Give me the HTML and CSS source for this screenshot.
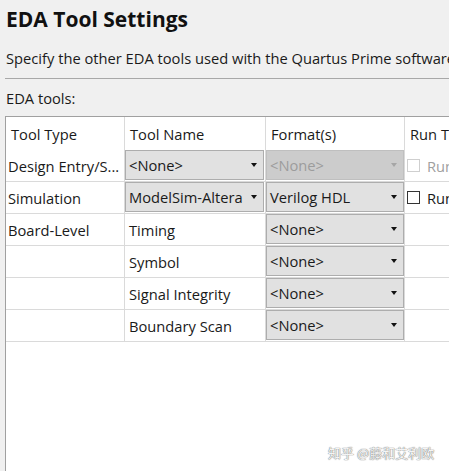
FILE: index.html
```html
<!DOCTYPE html>
<html lang="en">
<head>
  <meta charset="UTF-8" />
  <title>EDA Tool Settings</title>
  <link rel="stylesheet" href="styles.css">
</head>
<body>

<div class="page">
  <h1>EDA Tool Settings</h1>
  <p class="intro">Specify the other EDA tools used with the Quartus Prime software to develop your design.</p>
  <hr class="rule">
  <p class="label">EDA tools:</p>

  <div class="grid">
    <div class="cell head">Tool Type</div>
    <div class="cell head">Tool Name</div>
    <div class="cell head">Format(s)</div>
    <div class="cell head">Run Tool Automatically</div>

    <div class="cell">Design Entry/S...</div>
    <div class="cell"><div class="combo">&lt;None&gt;<span class="arrow"></span></div></div>
    <div class="cell"><div class="combo off">&lt;None&gt;<span class="arrow"></span></div></div>
    <div class="cell"><label class="check off"><span class="box"></span>Run this tool automatically</label></div>

    <div class="cell">Simulation</div>
    <div class="cell"><div class="combo">ModelSim-Altera<span class="arrow"></span></div></div>
    <div class="cell"><div class="combo">Verilog HDL<span class="arrow"></span></div></div>
    <div class="cell"><label class="check"><span class="box"></span>Run gate-level simulation</label></div>

    <div class="cell">Board-Level</div>
    <div class="cell sub">Timing</div>
    <div class="cell"><div class="combo">&lt;None&gt;<span class="arrow"></span></div></div>
    <div class="cell"></div>

    <div class="cell"></div>
    <div class="cell sub">Symbol</div>
    <div class="cell"><div class="combo">&lt;None&gt;<span class="arrow"></span></div></div>
    <div class="cell"></div>

    <div class="cell"></div>
    <div class="cell sub">Signal Integrity</div>
    <div class="cell"><div class="combo">&lt;None&gt;<span class="arrow"></span></div></div>
    <div class="cell"></div>

    <div class="cell"></div>
    <div class="cell sub">Boundary Scan</div>
    <div class="cell"><div class="combo">&lt;None&gt;<span class="arrow"></span></div></div>
    <div class="cell"></div>

    <div class="rest"></div>
  </div>
</div>

<div class="mark">知乎 @藤和艾利欧</div>

</body>
</html>
```

FILE: styles.css
```css
html, body { margin: 0; height: 100%; overflow: hidden; }
body { background: #f0f0f0; font-family: "Open Sans", "Noto Sans", sans-serif; font-size: 14.7px; color: #1a1a1a; position: relative; }
.page { padding: 0 0 0 6px; width: 600px; }
h1 { margin: 0; padding-top: 5px; font-size: 21px; line-height: 28px; font-weight: bold; color: #111; }
.intro { margin: 15px 0 0; line-height: 20px; white-space: nowrap; }
.rule { margin: 10px 0 0 -1px; border: none; border-top: 1px solid #a8a8a8; }
.label { margin: 9px 0 0; line-height: 20px; }

.grid { margin: 8px 0 0 -1px; display: grid; grid-template-columns: 119px 141px 139px 200px; grid-template-rows: 33px repeat(6, 32px) 200px; background: #fff; border-top: 1px solid #a0a0a0; border-left: 1px solid #a0a0a0; }
.cell { border-right: 1px solid #dadada; border-bottom: 1px solid #dadada; padding-left: 2px; display: flex; align-items: center; white-space: nowrap; overflow: hidden; }
.head { padding-left: 5px; border-bottom: none; }
.sub { padding-left: 4px; }
.rest { grid-column: 1 / -1; }

.combo { box-sizing: border-box; margin-left: -2px; width: 139px; height: 30px; margin-top: -1px; background: #e1e1e1; border: 1px solid #adadad; padding: 0 0 0 3px; display: flex; align-items: center; position: relative; }
.combo.off { background: #cccccc; color: #9c9c9c; border-color: #bfbfbf; }
.arrow { position: absolute; right: 6px; top: 12px; width: 0; height: 0; border-left: 3.5px solid transparent; border-right: 3.5px solid transparent; border-top: 4px solid #111; }
.combo.off .arrow { border-top-color: #a6a6a6; }

.check { display: flex; align-items: center; gap: 7px; padding-left: 0; }
.box { width: 11px; height: 11px; border: 1px solid #333; background: #fff; }
.check.off { color: #a0a0a0; }
.check.off .box { border-color: #cfcfcf; }

.mark { position: absolute; left: 328px; top: 443px; font-family: "Noto Sans CJK SC", sans-serif; font-size: 13px; color: #f4f4f4; text-shadow: 0 0 1px #777, 0 0 1px #777; }
```
